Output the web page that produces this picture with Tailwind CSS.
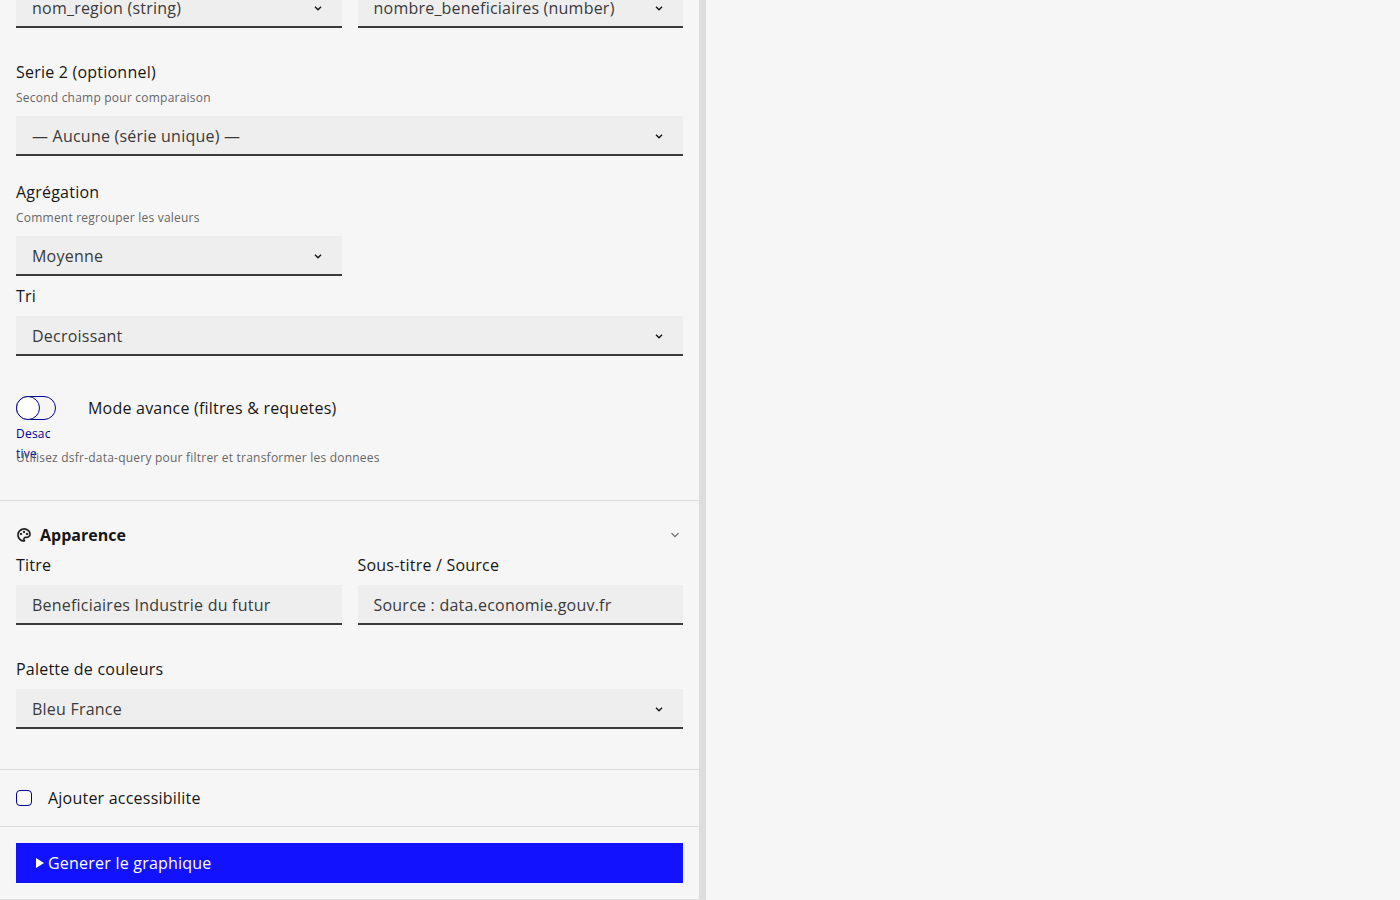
<!DOCTYPE html>
<html lang="fr">
<head>
<meta charset="utf-8">
<title>Graphique</title>
<script src="https://cdn.jsdelivr.net/npm/@tailwindcss/browser@4"></script>
</head>
<body class="bg-[#f6f6f6] font-['Open_Sans','Noto_Sans',sans-serif] text-[#161616] text-base tracking-[0.22px]">
<div class="h-[900px] w-[1400px] overflow-hidden flex">
  <aside class="w-[706px] h-[900px] shrink-0 border-r-[7px] border-[#dddddd]">
    <div class="-mt-[12px] flex flex-col">
      <div class="px-4 flex flex-col">
        <div class="grid grid-cols-2 gap-4">
          <div class="h-10 bg-[#eeeeee] border-b-2 border-[#3a3a3a] pl-4 pr-4 pt-[2px] flex items-center justify-between text-[#3a3a3a]"><span>nom_region (string)</span><svg class="w-4 h-4 text-[#161616]" viewBox="0 0 16 16" fill="none" stroke="currentColor" stroke-width="1.4"><path d="M5 6.7l3 3 3-3"/></svg></div>
          <div class="h-10 bg-[#eeeeee] border-b-2 border-[#3a3a3a] pl-4 pr-4 pt-[2px] flex items-center justify-between text-[#3a3a3a]"><span>nombre_beneficiaires (number)</span><svg class="w-4 h-4 text-[#161616]" viewBox="0 0 16 16" fill="none" stroke="currentColor" stroke-width="1.4"><path d="M5 6.7l3 3 3-3"/></svg></div>
        </div>
        <div class="mt-8 leading-6">Serie 2 (optionnel)</div>
        <div class="mt-1 text-xs leading-5 text-[#666666]">Second champ pour comparaison</div>
        <div class="mt-2 h-10 bg-[#eeeeee] border-b-2 border-[#3a3a3a] pl-4 pr-4 pt-[2px] flex items-center justify-between text-[#3a3a3a]"><span>— Aucune (série unique) —</span><svg class="w-4 h-4 text-[#161616]" viewBox="0 0 16 16" fill="none" stroke="currentColor" stroke-width="1.4"><path d="M5 6.7l3 3 3-3"/></svg></div>
        <div class="mt-6 leading-6">Agrégation</div>
        <div class="mt-1 text-xs leading-5 text-[#666666]">Comment regrouper les valeurs</div>
        <div class="mt-2 w-[326px] h-10 bg-[#eeeeee] border-b-2 border-[#3a3a3a] pl-4 pr-4 pt-[2px] flex items-center justify-between text-[#3a3a3a]"><span>Moyenne</span><svg class="w-4 h-4 text-[#161616]" viewBox="0 0 16 16" fill="none" stroke="currentColor" stroke-width="1.4"><path d="M5 6.7l3 3 3-3"/></svg></div>
        <div class="mt-2 leading-6">Tri</div>
        <div class="mt-2 h-10 bg-[#eeeeee] border-b-2 border-[#3a3a3a] pl-4 pr-4 pt-[2px] flex items-center justify-between text-[#3a3a3a]"><span>Decroissant</span><svg class="w-4 h-4 text-[#161616]" viewBox="0 0 16 16" fill="none" stroke="currentColor" stroke-width="1.4"><path d="M5 6.7l3 3 3-3"/></svg></div>
        <div class="mt-10 flex items-start h-[52px]">
          <div class="w-10 shrink-0">
            <div class="relative w-10 h-6 rounded-full border border-[#000091]">
              <div class="absolute -left-px -top-px w-6 h-6 rounded-full border border-[#000091] bg-white"></div>
            </div>
            <div class="mt-1 w-[38px] text-xs leading-5 text-[#000091] break-all">Desactive</div>
          </div>
          <div class="ml-8 leading-6">Mode avance (filtres &amp; requetes)</div>
        </div>
        <div class="text-xs leading-5 text-[#666666]">Utilisez dsfr-data-query pour filtrer et transformer les donnees</div>
      </div>
      <div class="mt-8 border-t border-[#dddddd] px-4 pt-[22px]">
        <div class="flex items-center justify-between h-6">
          <div class="flex items-center gap-2 font-bold tracking-normal"><svg class="w-4 h-4" viewBox="0 0 24 24" fill="currentColor" stroke="currentColor" stroke-width="0.5"><path d="M12 2C17.5222 2 22 5.97778 22 10.8889C22 13.9556 19.5111 16.4444 16.4444 16.4444H14.4778C13.5556 16.4444 12.8111 17.1889 12.8111 18.1111C12.8111 18.5333 12.9778 18.9222 13.2333 19.2111C13.5 19.5 13.6667 19.8889 13.6667 20.3333C13.6667 21.2556 12.9 22 12 22C6.47778 22 2 17.5222 2 12C2 6.47778 6.47778 2 12 2ZM10.8111 18.1111C10.8111 16.0843 12.451 14.4444 14.4778 14.4444H16.4444C18.4065 14.4444 20 12.851 20 10.8889C20 7.1392 16.4677 4 12 4C7.58172 4 4 7.58172 4 12C4 16.1052 7.09354 19.4922 11.0749 19.947C10.9 19.5 10.8111 18.8 10.8111 18.1111ZM7.5 12C6.67157 12 6 11.3284 6 10.5C6 9.67157 6.67157 9 7.5 9C8.32843 9 9 9.67157 9 10.5C9 11.3284 8.32843 12 7.5 12ZM16.5 12C15.6716 12 15 11.3284 15 10.5C15 9.67157 15.6716 9 16.5 9C17.3284 9 18 9.67157 18 10.5C18 11.3284 17.3284 12 16.5 12ZM12 9C11.1716 9 10.5 8.32843 10.5 7.5C10.5 6.67157 11.1716 6 12 6C12.8284 6 13.5 6.67157 13.5 7.5C13.5 8.32843 12.8284 9 12 9Z"/></svg><span>Apparence</span></div>
          <svg class="w-4 h-4 text-[#666666]" viewBox="0 0 16 16" fill="none" stroke="currentColor" stroke-width="1.2"><path d="M4.5 6.2L8 9.7l3.5-3.5"/></svg>
        </div>
        <div class="grid grid-cols-2 gap-4 mt-[6px]">
          <div><div class="leading-6">Titre</div><div class="mt-2 h-10 bg-[#eeeeee] border-b-2 border-[#3a3a3a] pl-4 pt-[2px] flex items-center text-[#3a3a3a]">Beneficiaires Industrie du futur</div></div>
          <div><div class="leading-6">Sous-titre / Source</div><div class="mt-2 h-10 bg-[#eeeeee] border-b-2 border-[#3a3a3a] pl-4 pt-[2px] flex items-center text-[#3a3a3a]">Source : data.economie.gouv.fr</div></div>
        </div>
        <div class="mt-8 leading-6">Palette de couleurs</div>
        <div class="mt-2 h-10 bg-[#eeeeee] border-b-2 border-[#3a3a3a] pl-4 pr-4 pt-[2px] flex items-center justify-between text-[#3a3a3a]"><span>Bleu France</span><svg class="w-4 h-4 text-[#161616]" viewBox="0 0 16 16" fill="none" stroke="currentColor" stroke-width="1.4"><path d="M5 6.7l3 3 3-3"/></svg></div>
      </div>
      <div class="mt-10 border-t border-[#dddddd] h-[57px] px-4 flex items-center gap-4">
        <div class="w-4 h-4 rounded-[4px] border border-[#000091] bg-white/40"></div>
        <span>Ajouter accessibilite</span>
      </div>
      <div class="border-t border-[#dddddd] h-[74px] px-4 pt-4 border-b">
        <div class="h-10 bg-[#1212ff] text-white pl-5 flex items-center gap-1"><svg class="w-2 h-[10px]" viewBox="0 0 8 10" fill="currentColor"><path d="M0 0l8 5-8 5z"/></svg><span>Generer le graphique</span></div>
      </div>
    </div>
  </aside>
  <main class="flex-1 bg-[#f6f6f6]"></main>
</div>
</body>
</html>
